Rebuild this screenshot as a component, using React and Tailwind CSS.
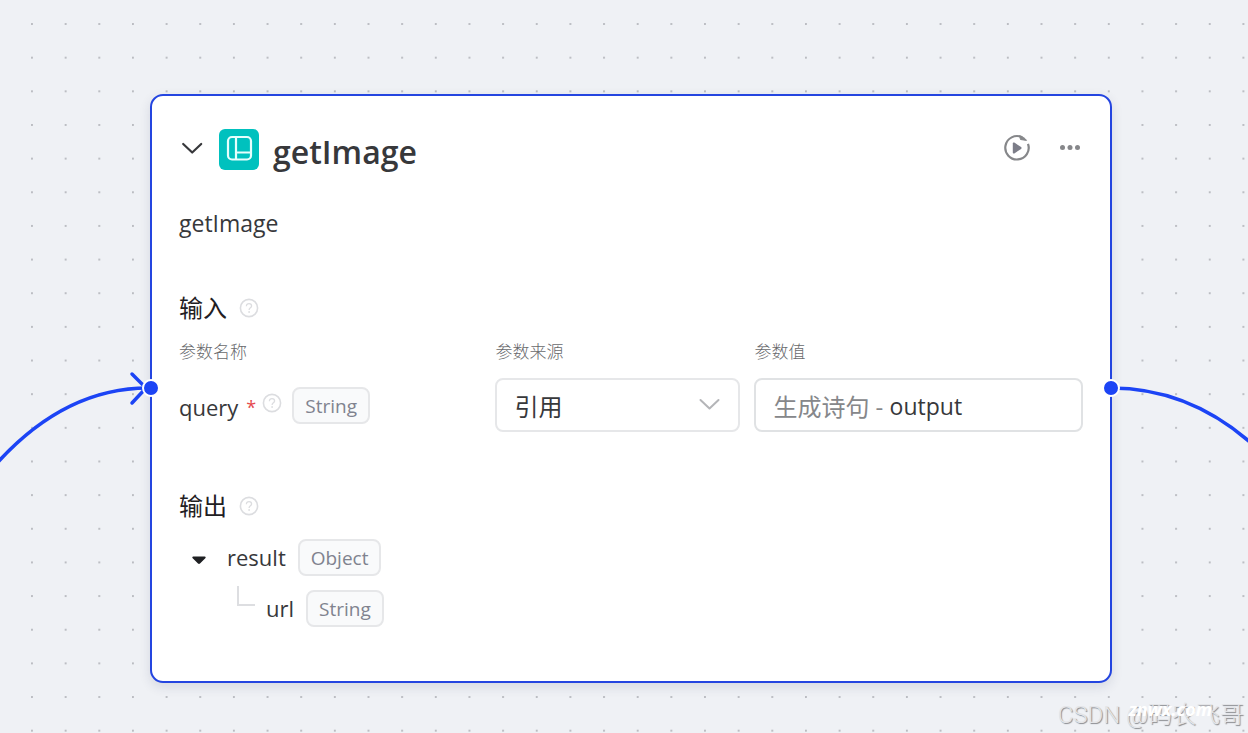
import React, { useState } from 'react';

const HelpIcon = () => (
  <svg className="w-5 h-5 shrink-0" viewBox="0 0 20 20" fill="none" stroke="#dcdde0">
    <circle cx="10" cy="10" r="8.6" strokeWidth="1.6" />
    <path d="M7.4 8.2c0-1.6 1.1-2.6 2.6-2.6s2.6 1 2.6 2.4c0 1.8-2.5 1.9-2.5 3.9" strokeWidth="1.3" />
    <circle cx="10.1" cy="14" r="0.9" fill="#dcdde0" stroke="none" />
  </svg>
);

const TypeTag = ({ children }) => (
  <span className="inline-flex items-center h-[37px] pt-[2px] px-[11px] border-2 border-[#e6e7e9] rounded-lg bg-[#f9fafb] text-[19px] text-[#80838f]">
    {children}
  </span>
);

const SectionTitle = ({ children }) => (
  <div className="flex items-center gap-3 h-8">
    <h3 className="text-[24px] leading-8 text-[#1f2023]">{children}</h3>
    <button type="button" aria-label="help" className="flex"><HelpIcon /></button>
  </div>
);

const Handle = () => (
  <span className="block w-[18px] h-[18px] rounded-full bg-[#1c44f5] border-2 border-white"></span>
);

const NodeHeader = ({ onToggle }) => (
  <div className="flex items-start h-[42px]">
    <button type="button" aria-label="toggle" onClick={onToggle} className="flex mt-2 w-[26px] justify-center">
      <svg className="w-6 h-6" viewBox="0 0 24 24" fill="none" stroke="#37383b" strokeWidth="2.2" strokeLinecap="round" strokeLinejoin="round">
        <path d="M3.2 7l9 8.5 9-8.5" />
      </svg>
    </button>
    <svg className="w-10 h-[41px] ml-[14px]" viewBox="0 0 40 41" fill="none">
      <rect width="40" height="41" rx="6" fill="#00c1be" />
      <rect x="9" y="8" width="23" height="22.5" rx="4" stroke="#e6fffd" strokeWidth="2.2" />
      <path d="M17 8v22.5M17 23.5h15" stroke="#e6fffd" strokeWidth="2.2" />
    </svg>
    <h2 className="ml-[14px] mt-[3px] text-[32px] leading-10 font-semibold text-[#37383b]">getImage</h2>
    <div className="ml-auto flex items-center gap-7 mt-[5px]">
      <button type="button" aria-label="run">
        <svg className="w-7 h-7" viewBox="0 0 28 28" fill="none">
          <path d="M25 9.8A11.7 11.7 0 1 1 19 3.2" stroke="#86878a" strokeWidth="2.2" />
          <path d="M16.5 1.8c3 .6 5.500 2.400 7 4.600l-6-.9z" fill="#86878a" stroke="#86878a" strokeLinejoin="round" />
          <path d="M9.800 9.400v9.200c0 .8.800 1.200 1.500.8l6.800-4.500c.6-.4.600-1.400 0-1.800l-6.800-4.500c-.7-.4-1.500 0-1.500.8z" fill="#7c7d88" />
        </svg>
      </button>
      <button type="button" aria-label="more">
        <svg className="w-6 h-7" viewBox="0 0 24 28" fill="#86878a">
          <circle cx="3.5" cy="13.5" r="2.5" />
          <circle cx="11" cy="13.5" r="2.5" />
          <circle cx="18.5" cy="13.5" r="2.5" />
        </svg>
      </button>
    </div>
  </div>
);

const InputParams = () => (
  <table className="w-full table-fixed text-left">
    <thead>
      <tr className="h-8 text-[17px] text-[#68696c]">
        <th className="w-[35%] p-0 font-light">参数名称</th>
        <th className="w-[259px] p-0 font-light">参数来源</th>
        <th className="p-0 font-light">参数值</th>
      </tr>
    </thead>
    <tbody>
      <tr className="h-[74px]">
        <td className="p-0">
          <div className="flex items-center">
            <label htmlFor="query-source" className="pt-1 text-[22px] text-[#37383b]">query</label>
            <span className="ml-2 pt-1 text-[18px] text-[#e5484d]">*</span>
            <button type="button" aria-label="help" className="flex ml-[6px] mr-[10px] -mt-1"><HelpIcon /></button>
            <TypeTag>String</TypeTag>
          </div>
        </td>
        <td className="p-0 pr-[14px]">
          <div className="relative">
            <select
              id="query-source"
              defaultValue="ref"
              className="appearance-none w-full h-[54px] pt-[3px] pl-[17px] border-2 border-[#e6e7e9] rounded-lg bg-white text-[24px] text-[#37383b]"
            >
              <option value="ref">引用</option>
              <option value="input">输入</option>
            </select>
            <svg className="absolute right-[18px] top-4 w-6 h-6 pointer-events-none" viewBox="0 0 24 24" fill="none" stroke="#b4b5b8" strokeWidth="2" strokeLinecap="round" strokeLinejoin="round">
              <path d="M2.5 6l9 8.5 9-8.5" />
            </svg>
          </div>
        </td>
        <td className="p-0">
          <button type="button" className="flex items-center w-full h-[54px] pt-[3px] px-[17px] border-2 border-[#e0e2e4] rounded-lg bg-white text-[24px] text-[#37383b]">
            <span className="text-[#86878a] whitespace-pre">生成诗句 - </span>
            <span className="text-[23px]">output</span>
          </button>
        </td>
      </tr>
    </tbody>
  </table>
);

const OutputTree = () => (
  <ul className="text-[22px] text-[#37383b]">
    <li>
      <div className="flex items-center h-[37px] pl-3">
        <button type="button" aria-label="collapse result" className="flex pt-1">
          <svg className="w-4 h-4" viewBox="0 0 16 16" fill="#1f2023">
            <path d="M2.3 4.5h11.4c1 0 1.3 1 .6 1.7L9 11.6c-.6.6-1.4.6-2 0L1.7 6.2C1 5.5 1.3 4.500 2.300 4.500z" />
          </svg>
        </button>
        <span className="ml-5 mr-3">result</span>
        <TypeTag>Object</TypeTag>
      </div>
      <ul className="mt-[14px]">
        <li className="flex items-center h-[37px] pl-[58px]">
          <span className="self-start w-[18px] h-5 -mt-1 mr-[11px] border-l-2 border-b-2 border-[#dddee1]"></span>
          <span className="mr-3">url</span>
          <TypeTag>String</TypeTag>
        </li>
      </ul>
    </li>
  </ul>
);

const App = () => {
  const [collapsed, setCollapsed] = useState(false);

  return (
    <main className="relative min-h-screen overflow-hidden bg-[#eff1f5] pt-[94px] pb-[50px] pl-[150px] pr-[136px] font-['Open_Sans','Noto_Sans_CJK_SC',sans-serif]">
      {/* Canvas grid */}
      <svg className="absolute inset-0 w-full h-full" aria-hidden="true">
        <defs>
          <pattern id="dots" x="15.2" y="7.2" width="33.65" height="33.65" patternUnits="userSpaceOnUse">
            <circle cx="16.8" cy="16.8" r="1" fill="#adafb5" />
          </pattern>
        </defs>
        <rect width="100%" height="100%" fill="url(#dots)" />
      </svg>

      <section className="relative border-2 border-[#2445e0] rounded-[13px] bg-white px-[27px] pt-[33px] pb-[54px] shadow-[0_4px_12px_rgba(30,40,80,0.12)]">
        <NodeHeader onToggle={() => setCollapsed(!collapsed)} />
        <p className="mt-9 text-[23px] leading-8 text-[#37383b]">getImage</p>

        {!collapsed && (
          <>
            <div className="mt-[53px]">
              <SectionTitle>输入</SectionTitle>
              <div className="mt-3">
                <InputParams />
              </div>
            </div>
            <div className="mt-12">
              <SectionTitle>输出</SectionTitle>
              <div className="mt-[17px]">
                <OutputTree />
              </div>
            </div>
          </>
        )}

        {/* Incoming edge */}
        <div className="absolute right-full top-[283px] -mr-2">
          <svg className="w-[160px] h-[100px] overflow-visible" viewBox="0 0 160 100" fill="none" stroke="#1c44f5" strokeWidth="3.5">
            <path d="M-2 83C42 35 92 9 148 9" />
            <path d="M132 -5l14 14-14 15" strokeLinecap="round" />
          </svg>
          <div className="absolute right-0 top-0"><Handle /></div>
        </div>

        {/* Outgoing edge */}
        <div className="absolute left-full top-[283px] -ml-2">
          <svg className="w-[160px] h-[100px] overflow-visible" viewBox="0 0 160 100" fill="none" stroke="#1c44f5" strokeWidth="3.5">
            <path d="M9 9C62 9 108 28 149 64" />
          </svg>
          <div className="absolute left-0 top-0"><Handle /></div>
        </div>
      </section>

      {/* Watermarks */}
      <div className="absolute right-1 bottom-0 text-[24px] leading-9 font-light text-[#e4e5e8] [text-shadow:1px_1px_1px_#85878b] font-['Roboto','Noto_Sans_CJK_SC',sans-serif]">
        CSDN @码农飞哥
      </div>
      <div className="absolute right-9 bottom-3 text-[18px] leading-6 font-bold italic text-white">znwx.com</div>
    </main>
  );
};

export default App;
